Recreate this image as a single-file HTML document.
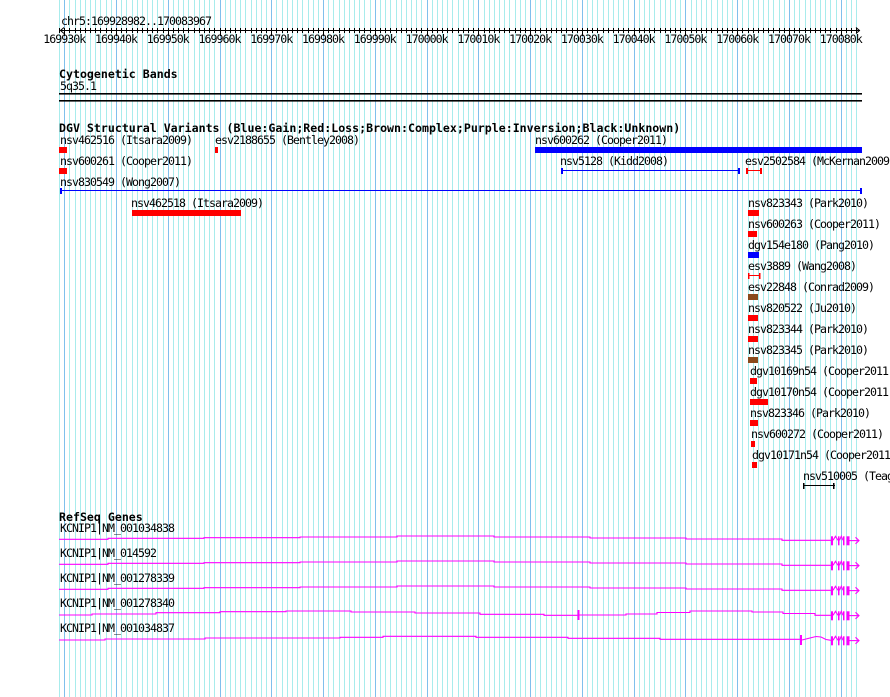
<!DOCTYPE html>
<html><head><meta charset="utf-8"><style>
html,body{margin:0;padding:0;background:#fff;width:890px;height:697px;overflow:hidden}
svg{display:block}
text{font-family:"DejaVu Sans Mono","Liberation Mono",monospace;font-size:11.6px;letter-spacing:-0.98px;fill:#000}
.b{font-weight:bold;font-size:11.6px;letter-spacing:0}
</style></head><body>
<svg id="s" width="890" height="697" xmlns="http://www.w3.org/2000/svg">
<g id="grid"></g>
<g id="rul" stroke="#000" stroke-width="1"></g>
<text x="61" y="25">chr5:169928982..170083967</text>
<g id="rl"></g>
<text class="b" x="59" y="78">Cytogenetic Bands</text>
<text x="60" y="90">5q35.1</text>
<rect x="59" y="93" width="803" height="1.6" fill="#000"/>
<rect x="59" y="100" width="803" height="1.6" fill="#000"/>
<text class="b" x="59" y="132">DGV Structural Variants (Blue:Gain;Red:Loss;Brown:Complex;Purple:Inversion;Black:Unknown)</text>

<text x="60" y="144">nsv462516 (Itsara2009)</text>
<rect x="59" y="147" width="8" height="6" fill="#f00"/>
<text x="215" y="144">esv2188655 (Bentley2008)</text>
<rect x="215" y="147" width="3" height="6" fill="#f00"/>
<text x="535" y="144">nsv600262 (Cooper2011)</text>
<rect x="535" y="147" width="327" height="6" fill="#00f"/>

<text x="60" y="165">nsv600261 (Cooper2011)</text>
<rect x="59" y="168" width="8" height="6" fill="#f00"/>
<text x="560" y="165">nsv5128 (Kidd2008)</text>
<rect x="561" y="170" width="178" height="1" fill="#00f"/><rect x="561" y="168" width="2" height="6" fill="#00f"/><rect x="738" y="168" width="2" height="6" fill="#00f"/>
<text x="745" y="165">esv2502584 (McKernan2009)</text>
<rect x="746" y="170" width="15" height="1" fill="#f00"/><rect x="746" y="168" width="2" height="6" fill="#f00"/><rect x="760" y="168" width="2" height="6" fill="#f00"/>

<text x="60" y="186">nsv830549 (Wong2007)</text>
<rect x="60" y="190" width="802" height="1" fill="#00f"/><rect x="60" y="188" width="2" height="6" fill="#00f"/><rect x="860" y="188" width="2" height="6" fill="#00f"/>

<text x="131" y="207">nsv462518 (Itsara2009)</text>
<rect x="132" y="210" width="109" height="6" fill="#f00"/>

<text x="748" y="207">nsv823343 (Park2010)</text>
<rect x="748" y="210" width="11" height="6" fill="#f00"/>
<text x="748" y="228">nsv600263 (Cooper2011)</text>
<rect x="748" y="231" width="9" height="6" fill="#f00"/>
<text x="748" y="249">dgv154e180 (Pang2010)</text>
<rect x="748" y="252" width="11" height="6" fill="#00f"/>
<text x="748" y="270">esv3889 (Wang2008)</text>
<rect x="748" y="275" width="12" height="1" fill="#f00"/><rect x="748" y="273" width="1.5" height="6" fill="#f00"/><rect x="759" y="273" width="1.5" height="6" fill="#f00"/>
<text x="748" y="291">esv22848 (Conrad2009)</text>
<rect x="748" y="294" width="10" height="6" fill="#8b4a1c"/>
<text x="748" y="312">nsv820522 (Ju2010)</text>
<rect x="748" y="315" width="10" height="6" fill="#f00"/>
<text x="748" y="333">nsv823344 (Park2010)</text>
<rect x="748" y="336" width="10" height="6" fill="#f00"/>
<text x="748" y="354">nsv823345 (Park2010)</text>
<rect x="748" y="357" width="10" height="6" fill="#8b4a1c"/>
<text x="750" y="375">dgv10169n54 (Cooper2011)</text>
<rect x="750" y="378" width="7" height="6" fill="#f00"/>
<text x="750" y="396">dgv10170n54 (Cooper2011)</text>
<rect x="750" y="399" width="18" height="6" fill="#f00"/>
<text x="750" y="417">nsv823346 (Park2010)</text>
<rect x="750" y="420" width="8" height="6" fill="#f00"/>
<text x="751" y="438">nsv600272 (Cooper2011)</text>
<rect x="751" y="441" width="4" height="6" fill="#f00"/>
<text x="752" y="459">dgv10171n54 (Cooper2011)</text>
<rect x="752" y="462" width="5" height="6" fill="#f00"/>
<text x="803" y="480">nsv510005 (Teague2010)</text>
<rect x="803" y="485" width="32" height="1" fill="#000"/><rect x="803" y="483" width="1.5" height="6" fill="#000"/><rect x="833" y="483" width="1.5" height="6" fill="#000"/>

<text class="b" x="59" y="521">RefSeq Genes</text>
<text x="60" y="532">KCNIP1|NM_001034838</text>
<text x="60" y="557">KCNIP1|NM_014592</text>
<text x="60" y="582">KCNIP1|NM_001278339</text>
<text x="60" y="607">KCNIP1|NM_001278340</text>
<text x="60" y="632">KCNIP1|NM_001034837</text>
<g id="genes" fill="none" stroke="#f0f" stroke-width="1.1"></g>
</svg>
<script>
var NS="http://www.w3.org/2000/svg";
function el(p,t,a){var e=document.createElementNS(NS,t);for(var k in a)e.setAttribute(k,a[k]);p.appendChild(e);return e;}
function X(k){return 64.2+(k-169930)*5.177;}
var g=document.getElementById('grid');
for(var k=169929;k<=170083;k++){var x=Math.round(X(k))+0.5;var maj=(k%10==0);
el(g,'line',{x1:x,y1:0,x2:x,y2:697,stroke:maj?'#80c0ec':'#a8ecec','stroke-width':1});}
var r=document.getElementById('rul');
el(r,'line',{x1:60,y1:30.5,x2:860,y2:30.5});
el(r,'polyline',{points:'64,27.5 60.5,30.5 64,33.5',fill:'none'});
el(r,'polyline',{points:'856,27.5 859.5,30.5 856,33.5',fill:'none'});
var rl=document.getElementById('rl');
for(var k=169929;k<=170083;k++){var x=Math.round(X(k))+0.5;var maj=(k%10==0);
el(r,'line',{x1:x,y1:28,x2:x,y2:maj?36:33});
if(maj&&k>=169930){var t=el(rl,'text',{x:X(k),y:43,'text-anchor':'middle'});t.textContent=k+'k';}}
var G=document.getElementById('genes');
function steps(pts){var d='';for(var i=0;i<pts.length;i++){var p=pts[i];d+=(i?'L':'M')+p[0]+' '+p[1]+' L'+p[2]+' '+p[1]+' ';}el(G,'path',{d:d});}
function exons(c){
el(G,'rect',{x:831,y:c-4,width:2,height:9,fill:'#f0f',stroke:'none'});
el(G,'rect',{x:838,y:c-4,width:1.5,height:9,fill:'#f0f',stroke:'none'});
el(G,'rect',{x:843,y:c-4,width:1.5,height:9,fill:'#f0f',stroke:'none'});
el(G,'rect',{x:846.5,y:c-4,width:3,height:9,fill:'#f0f',stroke:'none'});
el(G,'polyline',{points:(833)+','+c+' '+835.5+','+(c-4)+' '+838+','+c});
el(G,'polyline',{points:(839.5)+','+c+' '+841.3+','+(c-4)+' '+843+','+c});
el(G,'line',{x1:849.5,y1:c+0.3,x2:859,y2:c+0.3});
el(G,'polyline',{points:'855.5,'+(c-3)+' 859,'+(c+0.3)+' 855.5,'+(c+3.5)});}
for(var i=0;i<3;i++){var o=i*25;
steps([[59,539.3+o,108],[108,538.3+o,204],[204,537.7+o,300],[300,537+o,397],[397,536+o,494],[494,537+o,590],[590,538+o,686],[686,539+o,782],[782,540.3+o,831]]);
exons(540.3+o);}
steps([[59,615,92],[92,614,156],[156,612.7,220],[220,611.7,286],[286,611,351],[351,612,415],[415,613,480],[480,614.3,544],[544,615.3,578],[578,615,626],[626,614,657],[657,612.5,690],[690,611,720],[720,611,752],[752,612,783],[783,613.5,815],[815,615.3,831]]);
el(G,'rect',{x:577.5,y:610,width:2,height:10,fill:'#f0f',stroke:'none'});
exons(615.3);
steps([[59,640,105],[105,639,205],[205,638,340],[340,637.3,383],[383,636.3,476],[476,637.3,568],[568,638.3,660],[660,639.3,800]]);
el(G,'rect',{x:800,y:635,width:2,height:10,fill:'#f0f',stroke:'none'});
el(G,'polyline',{points:'802,640 810,638 816,636.5 821,637 826,639.5 831,640.3'});
exons(640.3);
</script>
</body></html>
